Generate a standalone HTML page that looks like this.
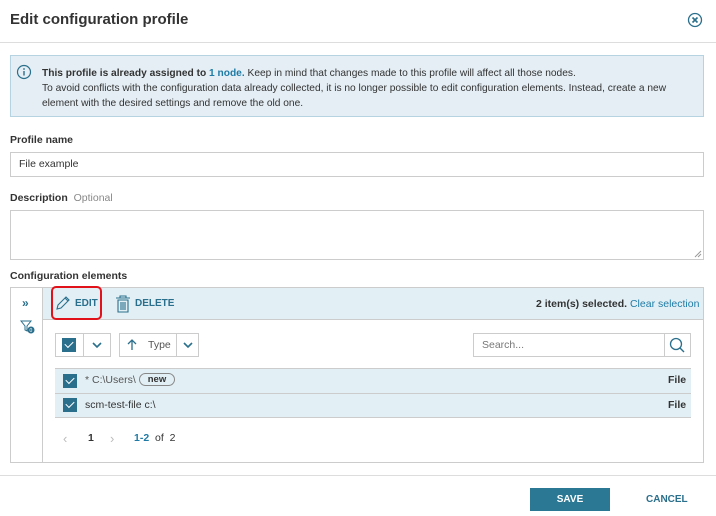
<!DOCTYPE html><html><head><style>
*{margin:0;padding:0;box-sizing:border-box}
body{width:716px;height:516px;background:#fff;font-family:"Liberation Sans",sans-serif;color:#333;position:relative;overflow:hidden;font-size:10.5px}
.a{position:absolute}
.b{font-weight:bold}
.lnk{color:#1f7ba6}
.cb{position:absolute;width:14px;height:14px;background:#2a6f8c}
.cb:after{content:"";position:absolute;left:3px;top:3px;width:7px;height:4px;border-left:1.5px solid #fff;border-bottom:1.5px solid #fff;transform:rotate(-45deg)}
.box{position:absolute;border:1px solid #ccc;background:#fff}
</style></head><body>
<div class="a b" style="left:10px;top:11px;font-size:15px;color:#333">Edit configuration profile</div>
<svg class="a" style="left:687px;top:12px" width="16" height="16"><circle cx="8" cy="8" r="6.5" fill="none" stroke="#2a6f8c" stroke-width="1.3"/><path d="M5.5 5.5l5 5M10.5 5.5l-5 5" stroke="#2a6f8c" stroke-width="1.6"/></svg>
<div class="a" style="left:0;top:42px;width:716px;height:1px;background:#ddd"></div>
<div class="a" style="left:10px;top:55px;width:694px;height:62px;background:#e4eef4;border:1px solid #b5d3e0"></div>
<svg class="a" style="left:16px;top:64px" width="16" height="16"><circle cx="8" cy="8" r="6.5" fill="none" stroke="#2a6f8c" stroke-width="1.2"/><path d="M8 7v4.5" stroke="#2a6f8c" stroke-width="1.4"/><circle cx="8" cy="5" r="0.9" fill="#2a6f8c"/></svg>
<div class="a" style="left:42px;top:66px;line-height:15px;font-size:10.2px;white-space:nowrap">
<span class="b">This profile is already assigned to <span class="lnk">1 node.</span></span> Keep in mind that changes made to this profile will affect all those nodes.<br>To avoid conflicts with the configuration data already collected, it is no longer possible to edit configuration elements. Instead, create a new<br>element with the desired settings and remove the old one.</div>
<div class="a b" style="left:10px;top:134px">Profile name</div>
<div class="box" style="left:10px;top:152px;width:694px;height:25px"></div>
<div class="a" style="left:19px;top:158px">File example</div>
<div class="a" style="left:10px;top:192px"><span class="b">Description</span>&nbsp; <span style="color:#888">Optional</span></div>
<div class="box" style="left:10px;top:210px;width:694px;height:50px"></div>
<svg class="a" style="left:694px;top:250px" width="8" height="8"><path d="M1 7l6-6M4 7l3-3" stroke="#999"/></svg>
<div class="a b" style="left:10px;top:270px">Configuration elements</div>
<div class="box" style="left:10px;top:287px;width:694px;height:176px"></div>
<div class="a" style="left:42px;top:287px;width:1px;height:176px;background:#ccc"></div>
<div class="a" style="left:43px;top:288px;width:660px;height:32px;background:#e2eff5;border-bottom:1px solid #ccc"></div>
<div class="a b" style="left:22px;top:296px;color:#2a6f8c;font-size:12px">»</div>
<svg class="a" style="left:20px;top:320px" width="16" height="14"><path d="M1 1h10l-4 5v5l-2-1V6z" fill="none" stroke="#2a6f8c"/><circle cx="11" cy="10" r="3.5" fill="#2a6f8c"/><text x="9.5" y="12" font-size="5" fill="#fff" font-family="Liberation Sans">0</text></svg>
<div class="a" style="left:51px;top:286px;width:51px;height:34px;border:2px solid #e2121b;border-radius:5px"></div>
<svg class="a" style="left:55px;top:295px" width="16" height="16"><path d="M2 14l1-4 8-8 3 3-8 8z M10 3l3 3" fill="none" stroke="#2a6f8c" stroke-width="1.1"/></svg>
<div class="a b" style="left:75px;top:298px;color:#2a6f8c;font-size:10px">EDIT</div>
<svg class="a" style="left:115px;top:295px" width="16" height="18"><path d="M1 3h14M5 3V1h6v2M3 5h10v12H3z M6 7v8M8 7v8M10 7v8" fill="none" stroke="#2a6f8c" stroke-width="1.1"/></svg>
<div class="a b" style="left:135px;top:298px;color:#2a6f8c;font-size:10px">DELETE</div>
<div class="a" style="left:536px;top:298px"><span class="b">2 item(s) selected.</span> <span class="lnk">Clear selection</span></div>
<div class="box" style="left:55px;top:333px;width:56px;height:24px"></div>
<div class="a" style="left:83px;top:333px;width:1px;height:24px;background:#ccc"></div>
<div class="cb" style="left:62px;top:338px"></div>
<svg class="a" style="left:91px;top:341px" width="12" height="8"><path d="M2 2l4 4 4-4" fill="none" stroke="#2a6f8c" stroke-width="1.6"/></svg>
<div class="box" style="left:119px;top:333px;width:80px;height:24px"></div>
<div class="a" style="left:176px;top:333px;width:1px;height:24px;background:#ccc"></div>
<svg class="a" style="left:127px;top:338px" width="10" height="13"><path d="M5 12V2M1 6l4-4 4 4" fill="none" stroke="#2a6f8c" stroke-width="1.3"/></svg>
<div class="a" style="left:148px;top:339px;color:#555">Type</div>
<svg class="a" style="left:182px;top:341px" width="12" height="8"><path d="M2 2l4 4 4-4" fill="none" stroke="#2a6f8c" stroke-width="1.6"/></svg>
<div class="box" style="left:473px;top:333px;width:218px;height:24px"></div>
<div class="a" style="left:664px;top:333px;width:1px;height:24px;background:#ccc"></div>
<div class="a" style="left:482px;top:339px;color:#777">Search...</div>
<svg class="a" style="left:668px;top:336px" width="18" height="18"><circle cx="8" cy="8" r="5.5" fill="none" stroke="#2a6f8c" stroke-width="1.3"/><path d="M12 12l4 4" stroke="#2a6f8c" stroke-width="1.4"/></svg>
<div class="a" style="left:55px;top:368px;width:636px;height:50px;background:#e2eff5;border-top:1px solid #ccc;border-bottom:1px solid #ccc"></div>
<div class="a" style="left:55px;top:393px;width:636px;height:1px;background:#ccc"></div>
<div class="cb" style="left:63px;top:374px"></div>
<div class="cb" style="left:63px;top:398px"></div>
<div class="a" style="left:85px;top:374px;color:#555">* C:\Users\</div>
<div class="a b" style="left:139px;top:373px;width:36px;height:13px;border:1px solid #888;border-radius:7px;font-size:9.5px;text-align:center;line-height:11px;color:#333">new</div>
<div class="a" style="left:85px;top:399px">scm-test-file c:\</div>
<div class="a b" style="left:668px;top:374px">File</div>
<div class="a b" style="left:668px;top:399px">File</div>
<div class="a" style="left:63px;top:431px;color:#bbb;font-size:13px">‹</div>
<div class="a b" style="left:88px;top:432px">1</div>
<div class="a" style="left:110px;top:431px;color:#bbb;font-size:13px">›</div>
<div class="a" style="left:134px;top:432px"><span class="b lnk">1-2</span>&nbsp;&nbsp;of&nbsp;&nbsp;2</div>
<div class="a" style="left:0;top:475px;width:716px;height:1px;background:#ddd"></div>
<div class="a b" style="left:530px;top:488px;width:80px;height:23px;background:#2a7893;color:#fff;text-align:center;line-height:23px;font-size:10px">SAVE</div>
<div class="a b" style="left:646px;top:494px;color:#2a6f8c;font-size:10px">CANCEL</div>
</body></html>
